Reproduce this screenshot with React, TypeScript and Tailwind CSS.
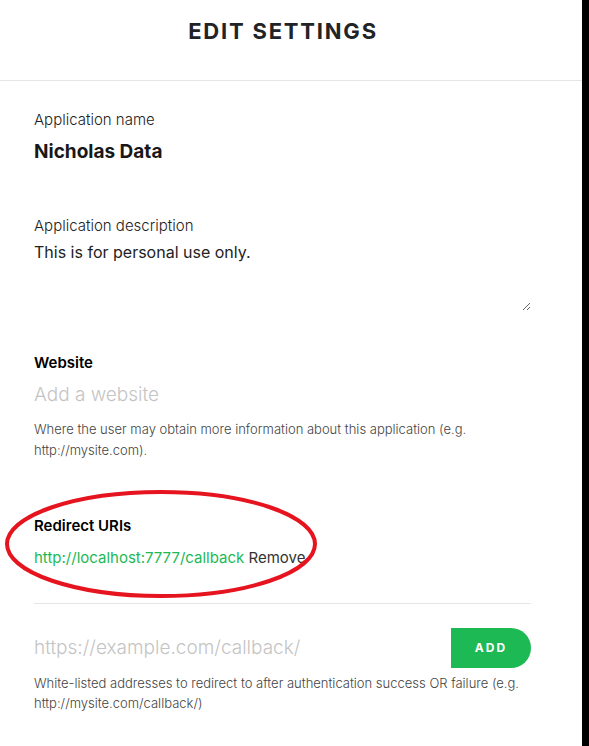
import React from "react";

const RedirectUri: React.FC<{ uri: string }> = ({ uri }) => (
    <p className="text-[15px] leading-[22px]">
        <span className="text-[#1db954]">{uri}</span>{" "}
        <span className="text-[#333]">Remove</span>
    </p>
)

export default function App() {
    return (
        <div className="flex w-[589px] min-h-[746px] bg-white" style={{ fontFamily: "Inter, 'Open Sans', sans-serif" }}>
            <div className="flex-1 flex flex-col">
                <div className="h-[81px] border-b border-[#e6e6e6] flex justify-center pt-[17px] pr-[16px]">
                    <h1 className="text-[22px] leading-[28px] font-bold tracking-[1.8px] text-[#222326]">EDIT SETTINGS</h1>
                </div>
                <div className="flex flex-col pl-[34px] pr-[51px] text-[#222]">
                    <label className="mt-[28px] text-[15px] leading-[22px] font-light text-[#222]">Application name</label>
                    <p className="mt-[8px] text-[19px] leading-[26px] font-bold text-[#181818]">Nicholas Data</p>

                    <label className="mt-[50px] text-[15px] leading-[22px] font-light text-[#222]">Application description</label>
                    <textarea
                        className="mt-[3px] h-[71px] w-full text-[16px] leading-[24px] font-normal text-[#222] outline-none border-none p-0 resize-y"
                        defaultValue="This is for personal use only."
                    />

                    <label className="mt-[41px] text-[15px] leading-[22px] font-semibold text-black">Website</label>
                    <input
                        className="mt-[7px] text-[19px] leading-[28px] font-light outline-none placeholder:text-[#c4c4c4]"
                        placeholder="Add a website"
                    />
                    <p className="mt-[10px] text-[13px] leading-[21px] font-light text-[#444]">
                        Where the user may obtain more information about this application (e.g. http://mysite.com).
                    </p>

                    <div className="relative mt-[54px] flex flex-col">
                        <svg className="absolute left-[-31px] top-[-26px]" width="318" height="110" viewBox="0 0 318 110">
                            <ellipse cx="158" cy="55" rx="154" ry="52" fill="none" stroke="#e5141f" strokeWidth="4" />
                        </svg>
                        <label className="text-[15px] leading-[22px] font-semibold text-black">Redirect URIs</label>
                        <div className="mt-[10px]">
                            <RedirectUri uri="http://localhost:7777/callback" />
                        </div>
                    </div>

                    <div className="mt-[34px] border-t border-[#e6e6e6]" />

                    <div className="mt-[24px] flex items-center">
                        <input
                            className="flex-1 text-[19px] leading-[28px] font-light outline-none placeholder:text-[#c4c4c4]"
                            placeholder="https://example.com/callback/"
                        />
                        <button className="h-[40px] w-[80px] bg-[#1db954] text-white text-[12px] font-bold tracking-[2px] rounded-r-full">
                            ADD
                        </button>
                    </div>
                    <p className="mt-[5px] text-[13px] leading-[20px] font-light text-[#444]">
                        White-listed addresses to redirect to after authentication success OR failure (e.g. http://mysite.com/callback/)
                    </p>
                </div>
            </div>
            <div className="w-[7px] bg-black" />
        </div>
    )
}
